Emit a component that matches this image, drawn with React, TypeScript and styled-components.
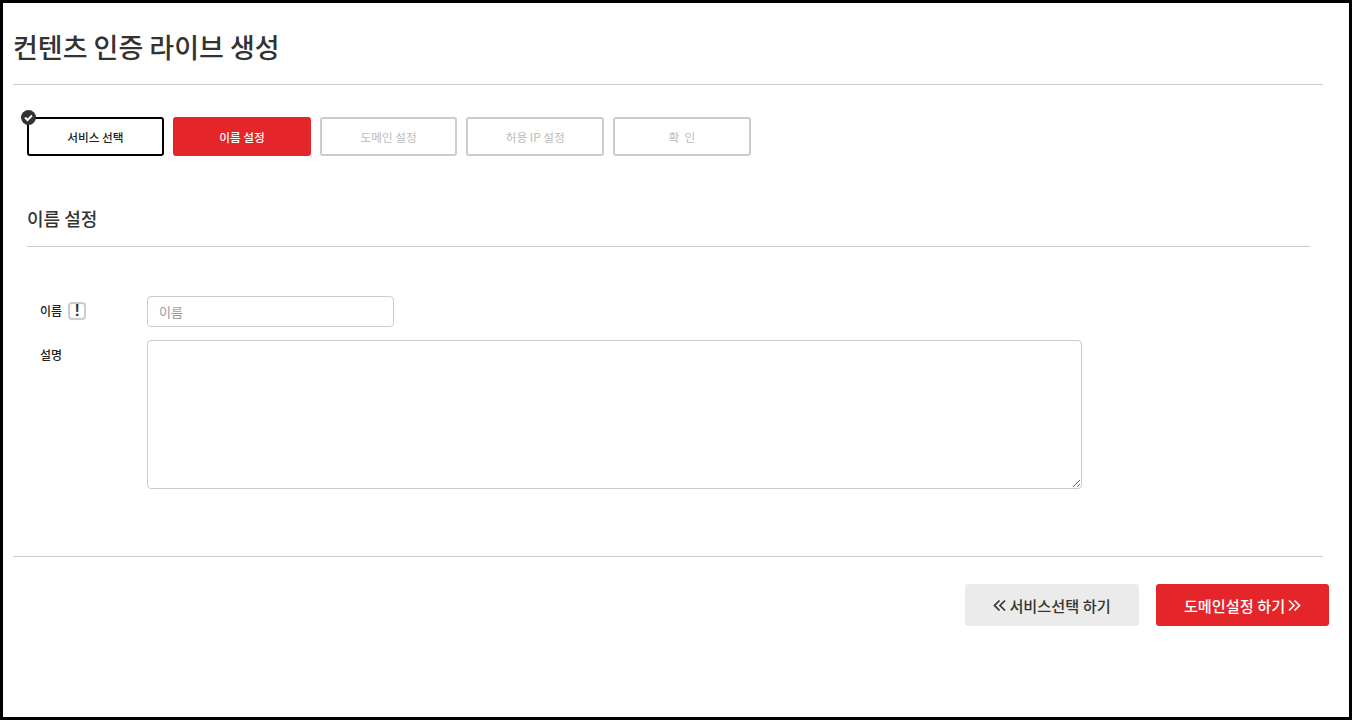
import React from "react";
import styled, { createGlobalStyle } from "styled-components";

const Global = createGlobalStyle`
  * { box-sizing: border-box; }
  html, body { margin: 0; padding: 0; background: #fff; }
  body { font-family: "Noto Sans CJK KR", "Noto Sans", sans-serif; color: #333; }
`;

const Frame = styled.div`
  width: 1352px;
  height: 720px;
  border: 3px solid #000;
  padding: 0 0 0 10px;
  overflow: hidden;
`;

const PageHeader = styled.header`
  width: 1310px;
  height: 82px;
  border-bottom: 1px solid #ccc;
  padding-top: 24px;
`;

const PageTitle = styled.h1`
  margin: 0;
  font-size: 27px;
  line-height: 40px;
  font-weight: 500;
  color: #333;
`;

const Steps = styled.ol`
  list-style: none;
  margin: 32px 0 0 13.6px;
  padding: 0;
  display: flex;
  gap: 9px;
`;

type StepState = "done" | "active" | "todo";

const Step = styled.li<{ $state: StepState }>`
  position: relative;
  width: 137.6px;
  height: 39px;
  display: flex;
  align-items: center;
  justify-content: center;
  border-radius: 3px;
  font-size: 11.7px;
  font-weight: ${(p) => (p.$state === "todo" ? 400 : 500)};
  white-space: pre;
  border: 2px solid
    ${(p) => (p.$state === "done" ? "#000" : p.$state === "active" ? "#e4252a" : "#ccc")};
  background: ${(p) => (p.$state === "active" ? "#e4252a" : "#fff")};
  color: ${(p) => (p.$state === "done" ? "#222" : p.$state === "active" ? "#fff" : "#bbb")};
`;

const CheckBadge = styled.svg`
  position: absolute;
  left: -8px;
  top: -9px;
  width: 15px;
  height: 15px;
`;

const Section = styled.section`
  margin: 42px 0 0 14px;
  width: 1283px;
`;

const SectionTitle = styled.h2`
  margin: 0;
  height: 49px;
  border-bottom: 1px solid #ccc;
  font-size: 18px;
  line-height: 40px;
  font-weight: 500;
  color: #333;
`;

const Form = styled.div`
  padding: 49px 0 0 13px;
  display: flex;
  flex-direction: column;
  gap: 13px;
`;

const FormRow = styled.div`
  display: grid;
  grid-template-columns: 107px 1fr;
  align-items: start;
`;

const Label = styled.label`
  display: flex;
  align-items: center;
  gap: 6px;
  height: 28px;
  font-size: 12px;
  font-weight: 500;
  color: #222;
`;

const HintIcon = styled.span`
  width: 18px;
  height: 18px;
  margin-top: 2px;
  border: 2px solid #ccc;
  border-radius: 4px;
  display: flex;
  align-items: center;
  justify-content: center;
  font-family: "Liberation Sans", sans-serif;
  font-size: 16px;
  font-weight: 700;
  color: #333;
`;

const TextInput = styled.input`
  display: block;
  width: 247px;
  height: 31px;
  border: 1px solid #ccc;
  border-radius: 4px;
  padding: 0 11px;
  font-family: inherit;
  font-size: 13px;
  outline: none;
  &::placeholder { color: #999; opacity: 1; }
`;

const TextArea = styled.textarea`
  display: block;
  width: 935px;
  height: 149px;
  border: 1px solid #ccc;
  border-radius: 4px;
  outline: none;
  font-family: inherit;
`;

const Footer = styled.footer`
  margin-top: 67px;
  width: 1310px;
  border-top: 1px solid #ccc;
`;

const Actions = styled.div`
  width: 1316px;
  padding-top: 27px;
  display: flex;
  justify-content: flex-end;
  gap: 17px;
`;

const ActionButton = styled.button<{ $primary?: boolean }>`
  height: 42px;
  width: ${(p) => (p.$primary ? "173px" : "174px")};
  border: 0;
  border-radius: 3px;
  display: flex;
  align-items: center;
  justify-content: center;
  gap: 3px;
  font-family: inherit;
  font-size: 15.2px;
  font-weight: 500;
  background: ${(p) => (p.$primary ? "#e4252a" : "#ebebeb")};
  color: ${(p) => (p.$primary ? "#fff" : "#333")};
`;

const Chevrons = ({ flip }: { flip?: boolean }) => (
  <svg width="13" height="13" viewBox="0 0 13 13" fill="none" stroke="currentColor" strokeWidth="1.7"
    style={flip ? { transform: "scaleX(-1)" } : undefined}>
    <path d="M6.5 1.5 1.5 6.5l5 5M12 1.5 7 6.5l5 5" />
  </svg>
);

export default function App() {
  return (
    <Frame>
      <Global />
      <PageHeader>
        <PageTitle>컨텐츠 인증 라이브 생성</PageTitle>
      </PageHeader>
      <Steps>
        <Step $state="done">
          <CheckBadge viewBox="0 0 15 15">
            <circle cx="7.5" cy="7.5" r="7.5" fill="#333" />
            <path d="M4 7.5l2.5 2.5L11 5.5" fill="none" stroke="#fff" strokeWidth="2" />
          </CheckBadge>
          서비스 선택
        </Step>
        <Step $state="active">이름 설정</Step>
        <Step $state="todo">도메인 설정</Step>
        <Step $state="todo">허용 IP 설정</Step>
        <Step $state="todo">{"확  인"}</Step>
      </Steps>
      <Section>
        <SectionTitle>이름 설정</SectionTitle>
        <Form>
          <FormRow>
            <Label>
              이름
              <HintIcon>!</HintIcon>
            </Label>
            <TextInput placeholder="이름" />
          </FormRow>
          <FormRow>
            <Label>설명</Label>
            <TextArea />
          </FormRow>
        </Form>
      </Section>
      <Footer>
        <Actions>
          <ActionButton>
            <Chevrons />
            서비스선택 하기
          </ActionButton>
          <ActionButton $primary>
            도메인설정 하기
            <Chevrons flip />
          </ActionButton>
        </Actions>
      </Footer>
    </Frame>
  );
}
